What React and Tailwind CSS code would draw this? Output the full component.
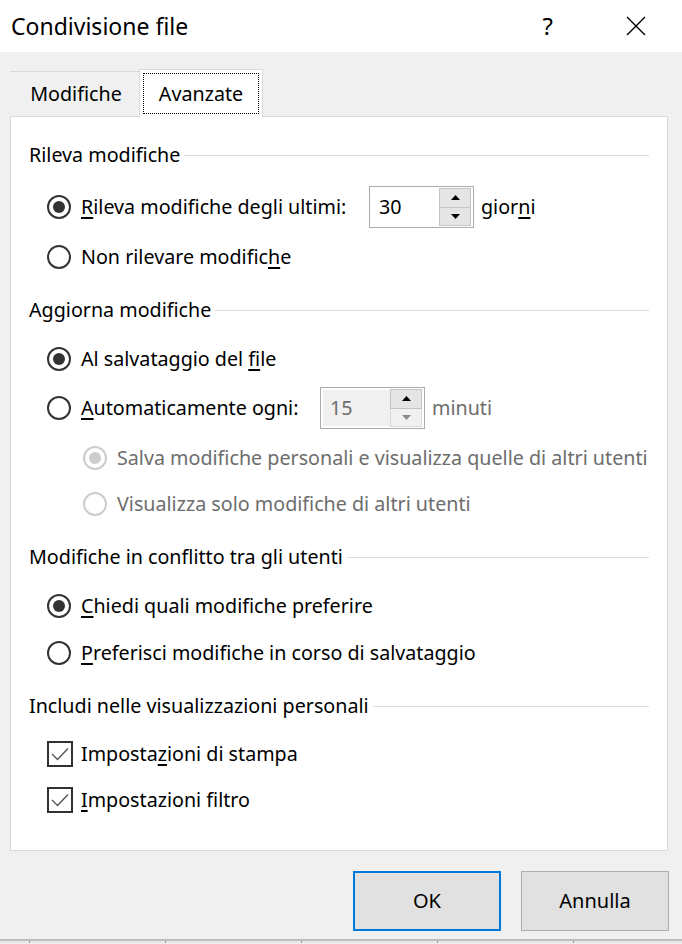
import React from 'react';

const FONT = { fontFamily: '"Noto Sans", "Open Sans", Arial, sans-serif' };

const U = ({ children }) => <span className="underline underline-offset-[3px] decoration-[1.5px]">{children}</span>;

const Radio = ({ checked, disabled }) => (
  <span
    className={`inline-flex items-center justify-center w-[24px] h-[24px] rounded-full border-2 shrink-0 bg-white ${
      disabled ? 'border-[#cccccc]' : 'border-[#333333]'
    }`}
  >
    {checked && (
      <span className={`w-[12px] h-[12px] rounded-full ${disabled ? 'bg-[#cccccc]' : 'bg-[#333333]'}`} />
    )}
  </span>
);

const Checkbox = () => (
  <span className="inline-flex items-center justify-center w-[26px] h-[26px] border-2 border-[#333333] shrink-0 bg-white">
    <svg width="18" height="14" viewBox="0 0 18 14" fill="none">
      <path d="M1 7 L6.5 12.5 L17 1.5" stroke="#555" strokeWidth="1.4" />
    </svg>
  </span>
);

const Spin = ({ value, disabled }) => (
  <div className="flex items-center w-[105px] h-[42px] border border-[#acacac] bg-white px-[2px]">
    <div
      className={`flex-1 h-[36px] flex items-center pl-[7px] ${
        disabled ? 'bg-[#f0f0f0] text-[#6d6d6d]' : 'text-[#000]'
      }`}
    >
      {value}
    </div>
    <div className="flex flex-col w-[32px] h-[38px]">
      <div className="flex-1 flex items-center justify-center bg-[#e5e5e5] border border-[#c4c4c4]">
        <svg width="9" height="5" viewBox="0 0 9 5">
          <path d="M0 5 L4.5 0 L9 5 Z" fill="#000" />
        </svg>
      </div>
      <div
        className={`flex-1 flex items-center justify-center border border-t-0 ${
          disabled ? 'bg-[#f0f0f0] border-[#dadada]' : 'bg-[#e5e5e5] border-[#c4c4c4]'
        }`}
      >
        <svg width="9" height="5" viewBox="0 0 9 5">
          <path d="M0 0 L9 0 L4.5 5 Z" fill={disabled ? '#8a8a8a' : '#000'} />
        </svg>
      </div>
    </div>
  </div>
);

const Header = ({ children, className = '' }) => (
  <div className={`flex items-center h-[30px] ${className}`}>
    <span className="whitespace-nowrap pr-[4px]">{children}</span>
    <div className="flex-1 h-px bg-[#dcdcdc] mr-[4px]" />
  </div>
);

export default function App() {
  return (
    <div className="w-[682px] h-[944px] bg-[#f0f0f0] overflow-hidden text-[19.7px] text-[#000]" style={FONT}>
      {/* Title bar */}
      <div className="h-[52px] bg-white flex items-center">
        <span className="pl-[11px] text-[23px]">Condivisione file</span>
        <span className="ml-auto text-[24px] mr-[73px]">?</span>
        <svg width="20" height="20" viewBox="0 0 20 20" className="mr-[36px]">
          <path d="M1 1 L19 19 M19 1 L1 19" stroke="#000" strokeWidth="1.4" />
        </svg>
      </div>

      {/* Tabs */}
      <div className="flex items-end h-[64px] pl-[10px]">
        <div className="w-[129px] h-[45px] border-t border-[#d9d9d9] flex items-center justify-center pl-[3px]">
          Modifiche
        </div>
        <div className="w-[124px] h-[48px] bg-white border border-b-0 border-[#d9d9d9] p-[3px] -mb-px relative z-10">
          <div className="h-full border border-dotted border-[#000] flex items-center justify-center">
            Avanzate
          </div>
        </div>
      </div>

      {/* Panel */}
      <div className="ml-[10px] w-[658px] h-[735px] bg-white border border-[#d9d9d9] pl-[18px] pr-[14px] pt-[23px] whitespace-nowrap">
        <Header>Rileva modifiche</Header>
        <div className="flex items-center h-[42px] mt-[16px] pl-[18px]">
          <Radio checked />
          <span className="ml-[10px] w-[288px]"><U>R</U>ileva modifiche degli ultimi:</span>
          <Spin value="30" />
          <span className="ml-[7px]">gior<U>n</U>i</span>
        </div>
        <div className="flex items-center h-[30px] mt-[14px] pl-[18px]">
          <Radio />
          <span className="ml-[10px]">Non rilevare modific<U>h</U>e</span>
        </div>

        <Header className="mt-[23px]">Aggiorna modifiche</Header>
        <div className="flex items-center h-[30px] mt-[19px] pl-[18px]">
          <Radio checked />
          <span className="ml-[10px]">Al salvataggio del <U>f</U>ile</span>
        </div>
        <div className="flex items-center h-[42px] mt-[13px] pl-[18px]">
          <Radio />
          <span className="ml-[10px] w-[239px]"><U>A</U>utomaticamente ogni:</span>
          <Spin value="15" disabled />
          <span className="ml-[7px] text-[#6d6d6d]">minuti</span>
        </div>
        <div className="flex items-center h-[30px] mt-[14px] pl-[54px] text-[#6d6d6d]">
          <Radio checked disabled />
          <span className="ml-[10px]">Salva modifiche personali e visualizza quelle di altri utenti</span>
        </div>
        <div className="flex items-center h-[30px] mt-[16px] pl-[54px] text-[#6d6d6d]">
          <Radio disabled />
          <span className="ml-[10px]">Visualizza solo modifiche di altri utenti</span>
        </div>

        <Header className="mt-[23px]">Modifiche in conflitto tra gli utenti</Header>
        <div className="flex items-center h-[30px] mt-[19px] pl-[18px]">
          <Radio checked />
          <span className="ml-[10px]"><U>C</U>hiedi quali modifiche preferire</span>
        </div>
        <div className="flex items-center h-[30px] mt-[17px] pl-[18px]">
          <Radio />
          <span className="ml-[10px]"><U>P</U>referisci modifiche in corso di salvataggio</span>
        </div>

        <Header className="mt-[23px]">Includi nelle visualizzazioni personali</Header>
        <div className="flex items-center h-[30px] mt-[18px] pl-[18px]">
          <Checkbox />
          <span className="ml-[8px]">Imposta<U>z</U>ioni di stampa</span>
        </div>
        <div className="flex items-center h-[30px] mt-[16px] pl-[18px]">
          <Checkbox />
          <span className="ml-[8px]"><U>I</U>mpostazioni filtro</span>
        </div>
      </div>

      {/* Buttons */}
      <div className="flex justify-end gap-[20px] mt-[20px] pr-[13px]">
        <button className="w-[148px] h-[60px] bg-[#e1e1e1] border-2 border-[#0078d7] text-[20px]">OK</button>
        <button className="w-[148px] h-[60px] bg-[#e1e1e1] border border-[#adadad] text-[20px]">Annulla</button>
      </div>

      {/* Sheet edge behind the dialog */}
      <div className="mt-[8px] h-[4px] border-t-2 border-[#bdbdbd] bg-[#e6e6e6] flex">
        <div className="w-[30px] border-r border-[#9a9a9a]" />
        <div className="w-[136px] border-r border-[#9a9a9a]" />
        <div className="w-[136px] border-r border-[#9a9a9a]" />
        <div className="w-[136px] border-r border-[#9a9a9a]" />
        <div className="w-[136px] border-r border-[#9a9a9a]" />
      </div>
    </div>
  );
}
